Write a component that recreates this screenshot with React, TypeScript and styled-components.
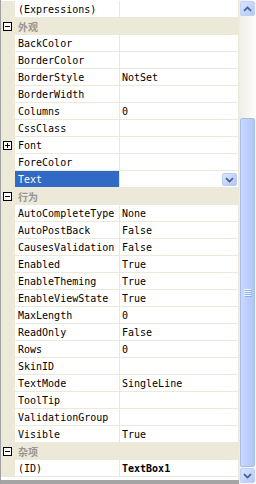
import styled, { createGlobalStyle } from "styled-components";

type Item =
  | { kind: "header"; title: string }
  | { kind: "prop"; name: string; value?: string; expandable?: boolean; selected?: boolean; bold?: boolean };

const items: Item[] = [
  { kind: "prop", name: "(Expressions)" },
  { kind: "header", title: "外观" },
  { kind: "prop", name: "BackColor" },
  { kind: "prop", name: "BorderColor" },
  { kind: "prop", name: "BorderStyle", value: "NotSet" },
  { kind: "prop", name: "BorderWidth" },
  { kind: "prop", name: "Columns", value: "0" },
  { kind: "prop", name: "CssClass" },
  { kind: "prop", name: "Font", expandable: true },
  { kind: "prop", name: "ForeColor" },
  { kind: "prop", name: "Text", selected: true },
  { kind: "header", title: "行为" },
  { kind: "prop", name: "AutoCompleteType", value: "None" },
  { kind: "prop", name: "AutoPostBack", value: "False" },
  { kind: "prop", name: "CausesValidation", value: "False" },
  { kind: "prop", name: "Enabled", value: "True" },
  { kind: "prop", name: "EnableTheming", value: "True" },
  { kind: "prop", name: "EnableViewState", value: "True" },
  { kind: "prop", name: "MaxLength", value: "0" },
  { kind: "prop", name: "ReadOnly", value: "False" },
  { kind: "prop", name: "Rows", value: "0" },
  { kind: "prop", name: "SkinID" },
  { kind: "prop", name: "TextMode", value: "SingleLine" },
  { kind: "prop", name: "ToolTip" },
  { kind: "prop", name: "ValidationGroup" },
  { kind: "prop", name: "Visible", value: "True" },
  { kind: "header", title: "杂项" },
  { kind: "prop", name: "(ID)", value: "TextBox1", bold: true },
];

// scroll position of the thumb inside the track
const thumbOffset = 102;

const ToggleBox = ({ open }: { open: boolean }) => (
  <svg width="9" height="9" viewBox="0 0 9 9">
    <rect x="0.5" y="0.5" width="8" height="8" fill="#fff" stroke="#000" />
    <line x1="2" y1="4.5" x2="7" y2="4.5" stroke="#000" />
    {!open && <line x1="4.5" y1="2" x2="4.5" y2="7" stroke="#000" />}
  </svg>
);

const Chevron = ({ down }: { down?: boolean }) => (
  <svg width="9" height="6" viewBox="0 0 9 6">
    <path
      d={down ? "M1 1.2 L4.5 4.6 L8 1.2" : "M1 4.8 L4.5 1.4 L8 4.8"}
      fill="none"
      stroke="#4D6185"
      strokeWidth="1.8"
    />
  </svg>
);

const Grip = () => (
  <svg width="8" height="8" viewBox="0 0 8 8">
    {[0, 2, 4, 6].map((y) => (
      <g key={y}>
        <rect x="0" y={y} width="7" height="1" fill="#EEF4FE" />
        <rect x="1" y={y + 1} width="7" height="1" fill="#8CB0F8" />
      </g>
    ))}
  </svg>
);

const App = () => {
  return (
    <>
      <GlobalStyle />
      <Frame>
        <GridPane>
          <RowsArea>
            {items.map((item, i) =>
              item.kind === "header" ? (
                <HeaderRow key={i}>
                  <Strip>
                    <ToggleBox open />
                  </Strip>
                  <HeaderTitle>{item.title}</HeaderTitle>
                </HeaderRow>
              ) : (
                <PropRow key={i}>
                  <Strip>{item.expandable && <ToggleBox open={false} />}</Strip>
                  <NameCell $selected={item.selected}>{item.name}</NameCell>
                  <ValueCell $bold={item.bold}>
                    {item.value}
                    {item.selected && (
                      <DropButton>
                        <Chevron down />
                      </DropButton>
                    )}
                  </ValueCell>
                </PropRow>
              )
            )}
          </RowsArea>
          <Splitter />
        </GridPane>
        <Scrollbar>
          <ScrollButton>
            <Chevron />
          </ScrollButton>
          <Track style={{ paddingTop: thumbOffset }}>
            <Thumb>
              <Grip />
            </Thumb>
          </Track>
          <ScrollButton>
            <Chevron down />
          </ScrollButton>
        </Scrollbar>
      </Frame>
    </>
  );
};

export default App;

const GlobalStyle = createGlobalStyle`
  html, body {
    margin: 0;
    padding: 0;
    background: #fff;
  }
`;

const Frame = styled.div`
  display: flex;
  width: 256px;
  height: 484px;
  overflow: hidden;
  font-family: "DejaVu Sans Mono", "Liberation Mono", monospace;
  font-size: 10px;
  color: #000;
`;

const GridPane = styled.div`
  display: flex;
  flex-direction: column;
  width: 239px;
  box-sizing: border-box;
  border-left: 1px solid #a0a0a0;
`;

const RowsArea = styled.div`
  flex: 1;
  overflow: hidden;
  padding-top: 1px;
  border-right: 1px solid #ece9d8;
  background: #fff;
`;

const Splitter = styled.div`
  height: 4px;
  background: #a4a4a4;
`;

const HeaderRow = styled.div`
  display: flex;
  align-items: center;
  height: 17px;
  background: #ece9d8;
`;

const Strip = styled.div`
  display: flex;
  align-items: center;
  justify-content: center;
  flex: 0 0 14px;
  height: 17px;
  padding-right: 1px;
  box-sizing: border-box;
  background: #ece9d8;
`;

const HeaderTitle = styled.span`
  padding-left: 3px;
  font-family: "Noto Sans CJK SC", sans-serif;
  font-size: 10px;
  font-weight: bold;
  color: #959595;
`;

const PropRow = styled.div`
  display: flex;
  height: 17px;
`;

const NameCell = styled.div<{ $selected?: boolean }>`
  flex: 0 0 105px;
  box-sizing: border-box;
  padding: 1px 0 0 3px;
  line-height: 15px;
  border-right: 1px solid #ece9d8;
  border-bottom: 1px solid #ece9d8;
  white-space: nowrap;
  overflow: hidden;
  background: ${(p) => (p.$selected ? "#316ac5" : "#fff")};
  color: ${(p) => (p.$selected ? "#fff" : "#000")};
`;

const ValueCell = styled.div<{ $bold?: boolean }>`
  flex: 1;
  display: flex;
  align-items: center;
  box-sizing: border-box;
  padding: 1px 1px 0 2px;
  line-height: 15px;
  border-bottom: 1px solid #ece9d8;
  white-space: nowrap;
  font-weight: ${(p) => (p.$bold ? "bold" : "normal")};
`;

const DropButton = styled.div`
  display: flex;
  align-items: center;
  justify-content: center;
  margin-left: auto;
  width: 15px;
  height: 13px;
  box-sizing: border-box;
  border: 1px solid #b8cbf6;
  border-radius: 2px;
  background: linear-gradient(135deg, #dde7fe, #c3d4fc 55%, #b2c6f5);
`;

const Scrollbar = styled.div`
  display: flex;
  flex-direction: column;
  width: 17px;
  box-sizing: border-box;
  padding: 1px 1px 1px 1px;
  background: linear-gradient(to right, #eeede5, #f4f3ee 40%, #fdfdfa);
`;

const ScrollButton = styled.div`
  display: flex;
  align-items: center;
  justify-content: center;
  height: 15px;
  box-sizing: border-box;
  border: 1px solid #c0d1fa;
  border-radius: 2px;
  background: linear-gradient(135deg, #dbe5fe, #c3d4fc 55%, #b4c8f6);
`;

const Track = styled.div`
  flex: 1;
  display: flex;
  flex-direction: column;
  box-sizing: border-box;
  padding-bottom: 1px;
`;

const Thumb = styled.div`
  flex: 1;
  display: flex;
  align-items: center;
  justify-content: center;
  box-sizing: border-box;
  border: 1px solid #a9bdec;
  border-radius: 2px;
  background: linear-gradient(to right, #cad8fd, #bccefa 50%, #b3c7f6);
`;
